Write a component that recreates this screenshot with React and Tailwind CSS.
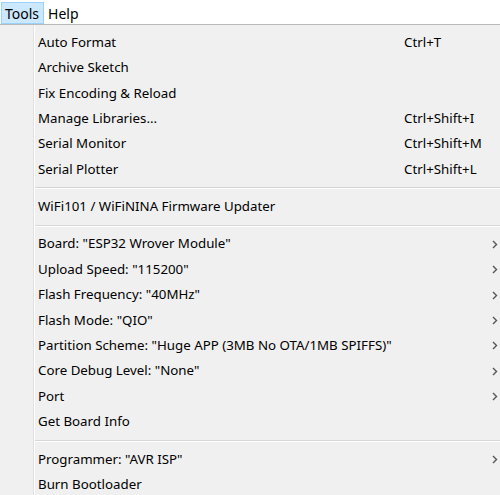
import React from "react";

const Chevron = () => (
  <svg width="6" height="9" viewBox="0 0 6 9" className="block">
    <path d="M1 1 L4.5 4.5 L1 8" fill="none" stroke="#555" strokeWidth="1.4" />
  </svg>
);

const groups = [
  [
    ["Auto Format", "Ctrl+T"],
    ["Archive Sketch"],
    ["Fix Encoding & Reload"],
    ["Manage Libraries...", "Ctrl+Shift+I"],
    ["Serial Monitor", "Ctrl+Shift+M"],
    ["Serial Plotter", "Ctrl+Shift+L"],
  ],
  [["WiFi101 / WiFiNINA Firmware Updater"]],
  [
    ['Board: "ESP32 Wrover Module"', null, true],
    ['Upload Speed: "115200"', null, true],
    ['Flash Frequency: "40MHz"', null, true],
    ['Flash Mode: "QIO"', null, true],
    ['Partition Scheme: "Huge APP (3MB No OTA/1MB SPIFFS)"', null, true],
    ['Core Debug Level: "None"', null, true],
    ["Port", null, true],
    ["Get Board Info"],
  ],
  [
    ['Programmer: "AVR ISP"', null, true],
    ["Burn Bootloader"],
  ],
];

function Row({ label, shortcut, sub }) {
  return (
    <div className="flex items-center h-[25.4px]">
      <div className="w-[38px] shrink-0" />
      <div className="flex-1 whitespace-nowrap">{label}</div>
      {shortcut && <div className="w-[96px] shrink-0 whitespace-nowrap">{shortcut}</div>}
      {sub && (
        <div className="w-[8px] shrink-0 flex justify-start">
          <Chevron />
        </div>
      )}
    </div>
  );
}

export default function App() {
  return (
    <div
      className="w-[500px] h-[495px] overflow-hidden bg-[#f0f0f0] text-[13.3px] text-black"
      style={{ fontFamily: '"Noto Sans", "Open Sans", sans-serif' }}
    >
      <div className="h-[25px] bg-white border-b border-[#b9b9b9] flex items-start text-[14px]">
        <div className="h-[22px] mt-[2px] ml-[1px] pl-[3px] pr-[4px] flex items-center bg-[#cce8ff] border border-[#99d1ff]">
          Tools
        </div>
        <div className="h-[22px] mt-[2px] px-[4px] flex items-center">Help</div>
      </div>
      <div className="relative pt-[5px]">
        <div className="absolute left-[33px] top-0 bottom-0 w-px bg-[#e2e2e2]" />
        <div className="absolute left-[34px] top-0 bottom-0 w-px bg-white" />
        {groups.map((g, gi) => (
          <div key={gi}>
            {gi > 0 && (
              <div className="h-[12px] flex flex-col justify-center pl-[35px]">
                <div className="h-px bg-[#d7d7d7]" />
                <div className="h-px bg-white" />
              </div>
            )}
            {g.map((r, i) => (
              <Row key={i} label={r[0]} shortcut={r[1]} sub={r[2]} />
            ))}
          </div>
        ))}
      </div>
    </div>
  );
}
